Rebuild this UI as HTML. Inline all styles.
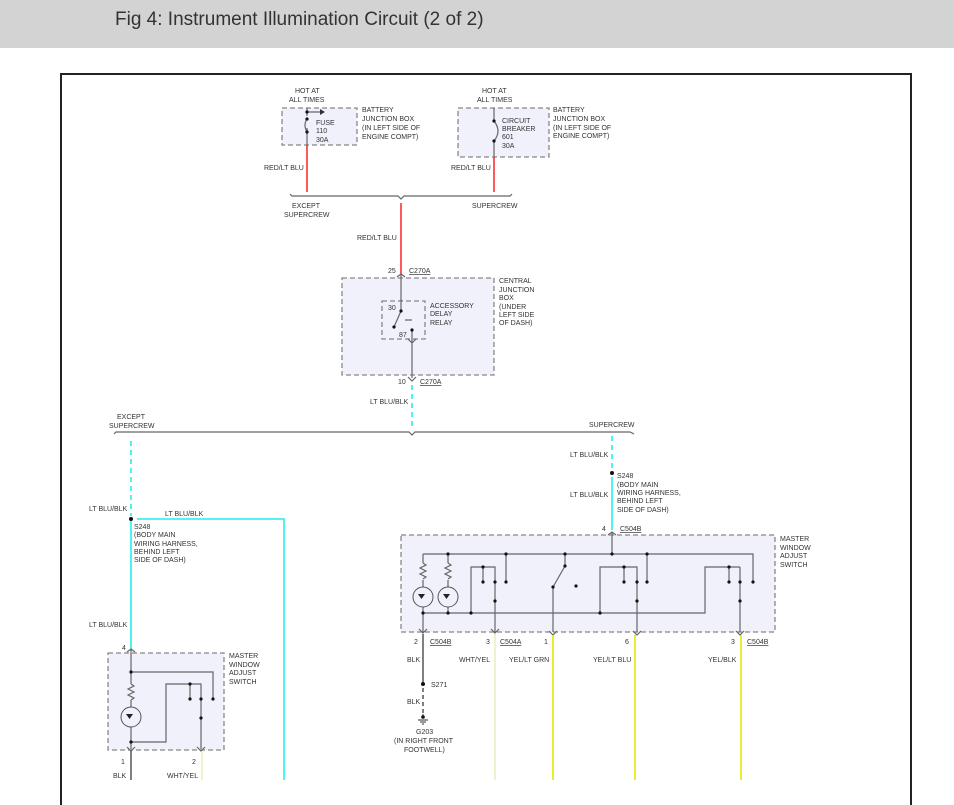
<!DOCTYPE html>
<html><head><meta charset="utf-8"><style>
body{margin:0;width:954px;height:805px;overflow:hidden;background:#fff;position:relative;font-family:"Liberation Sans",sans-serif}
#hd{position:absolute;left:0;top:0;width:954px;height:48px;background:#d3d3d3}
#hd span{position:absolute;left:115px;top:9px;font-size:19px;color:#333}
svg{position:absolute;left:0;top:0}
text{font-family:"Liberation Sans",sans-serif;font-size:7px;fill:#333}
.bx{fill:#f1f1fb;stroke:#888;stroke-width:1.3;stroke-dasharray:5 3}
.w{stroke:#666;stroke-width:1.2;fill:none}
.r{stroke:#f22;stroke-width:1.5}
.c{stroke:#2ee;stroke-width:1.6}
.cd{stroke:#2ee;stroke-width:1.6;stroke-dasharray:5 4}
.y{stroke:#e6e600;stroke-width:1.6}
.py{stroke:#ecebb8;stroke-width:1.4}
.k{stroke:#555;stroke-width:1.5}
</style></head><body>
<div id="hd"><span>Fig 4: Instrument Illumination Circuit (2 of 2)</span></div>
<svg width="954" height="805" viewBox="0 0 954 805">
<rect x="61" y="74" width="850" height="760" fill="none" stroke="#222" stroke-width="2"/>
<!-- top left fuse -->
<text x="295" y="93">HOT AT</text><text x="289" y="102">ALL TIMES</text>
<rect class="bx" x="282" y="108" width="75" height="37"/>
<path class="w" d="M307 108V116M307 128V145M307 112H320"/><path d="M320 109L325 112L320 115Z" fill="#333"/>
<path class="w" d="M307 119Q303 125 307 132"/>
<g fill="#111"><circle cx="307" cy="112" r="1.6"/><circle cx="307" cy="119" r="1.6"/><circle cx="307" cy="132" r="1.6"/></g>
<text x="316" y="125">FUSE</text><text x="316" y="133">110</text><text x="316" y="142">30A</text>
<text x="362" y="112">BATTERY</text><text x="362" y="121">JUNCTION BOX</text><text x="362" y="130">(IN LEFT SIDE OF</text><text x="362" y="139">ENGINE COMPT)</text>
<line class="r" x1="307" y1="145" x2="307" y2="192"/>
<text x="264" y="170">RED/LT BLU</text>
<!-- top right breaker -->
<text x="482" y="93">HOT AT</text><text x="477" y="102">ALL TIMES</text>
<rect class="bx" x="458" y="108" width="91" height="49"/>
<path class="w" d="M494 108V121M494 141V157"/><path class="w" d="M494 121Q502 131 494 141"/>
<g fill="#111"><circle cx="494" cy="121" r="1.6"/><circle cx="494" cy="141" r="1.6"/></g>
<text x="502" y="123">CIRCUIT</text><text x="502" y="131">BREAKER</text><text x="502" y="139">601</text><text x="502" y="148">30A</text>
<text x="553" y="112">BATTERY</text><text x="553" y="121">JUNCTION BOX</text><text x="553" y="130">(IN LEFT SIDE OF</text><text x="553" y="138">ENGINE COMPT)</text>
<line class="r" x1="494" y1="157" x2="494" y2="192"/>
<text x="451" y="170">RED/LT BLU</text>
<path class="w" d="M290 194L292 196H398L401 199L404 196H510L512 194"/>
<text x="292" y="208">EXCEPT</text><text x="284" y="217">SUPERCREW</text><text x="472" y="208">SUPERCREW</text>
<line class="r" x1="401" y1="203" x2="401" y2="274"/>
<text x="357" y="240">RED/LT BLU</text>
<text x="388" y="273">25</text><text x="409" y="273" text-decoration="underline">C270A</text>
<rect class="bx" x="342" y="278" width="152" height="97"/>
<text x="499" y="283">CENTRAL</text><text x="499" y="292">JUNCTION</text><text x="499" y="300">BOX</text><text x="499" y="309">(UNDER</text><text x="499" y="317">LEFT SIDE</text><text x="499" y="325">OF DASH)</text>
<path class="w" d="M397 277L401 274L405 277M401 274V301M397 303L401 300L405 303"/>
<rect class="bx" x="382" y="301" width="43" height="38"/>
<text x="388" y="310">30</text><text x="399" y="337">87</text>
<text x="430" y="308">ACCESSORY</text><text x="430" y="316">DELAY</text><text x="430" y="325">RELAY</text>
<path class="w" d="M401 301V311M401 311L394 327M405 320H412M412 330V378M408 339L412 343L416 339M408 377L412 381L416 377"/>
<g fill="#111"><circle cx="401" cy="311" r="1.6"/><circle cx="394" cy="327" r="1.6"/><circle cx="412" cy="330" r="1.6"/></g>
<text x="398" y="384">10</text><text x="420" y="384" text-decoration="underline">C270A</text>
<line class="cd" x1="412" y1="385" x2="412" y2="430"/>
<text x="370" y="404">LT BLU/BLK</text>
<path class="w" d="M114 434L116 432H409L412 435L415 432H630L634 434"/>
<text x="117" y="419">EXCEPT</text><text x="109" y="428">SUPERCREW</text><text x="589" y="427">SUPERCREW</text>
<!-- left branch -->
<line class="cd" x1="131" y1="441" x2="131" y2="516"/>
<text x="89" y="511">LT BLU/BLK</text><text x="165" y="516">LT BLU/BLK</text>
<circle cx="131" cy="519" r="2" fill="#111"/>
<path class="c" fill="none" d="M131 521V650M137 519H284V780"/>
<text x="134" y="529">S248</text><text x="134" y="537">(BODY MAIN</text><text x="134" y="546">WIRING HARNESS,</text><text x="134" y="554">BEHIND LEFT</text><text x="134" y="562">SIDE OF DASH)</text>
<text x="89" y="627">LT BLU/BLK</text><text x="122" y="650">4</text>
<rect class="bx" x="108" y="653" width="116" height="97"/>
<text x="229" y="658">MASTER</text><text x="229" y="667">WINDOW</text><text x="229" y="675">ADJUST</text><text x="229" y="684">SWITCH</text>
<path class="w" d="M127 652L131 649L135 652M131 650V684M131 700V707M131 727V749M131 672H213V699M131 742H166V684H201V749M190 684V699M127 747L131 751L135 747M197 747L201 751L205 747"/>
<path class="w" d="M131 684l3 2-6 3 6 3-6 3 6 3-3 2"/>
<circle cx="131" cy="717" r="10" fill="none" stroke="#555"/><path d="M126 714h7l-3.5 5z" fill="#222"/>
<g fill="#111"><circle cx="131" cy="672" r="1.6"/><circle cx="131" cy="742" r="1.6"/><circle cx="190" cy="684" r="1.6"/><circle cx="190" cy="699" r="1.6"/><circle cx="201" cy="699" r="1.6"/><circle cx="213" cy="699" r="1.6"/><circle cx="201" cy="718" r="1.6"/></g>
<text x="121" y="764">1</text><text x="192" y="764">2</text>
<line class="k" x1="131" y1="751" x2="131" y2="780"/><line class="py" x1="202" y1="752" x2="202" y2="780"/>
<text x="113" y="778">BLK</text><text x="167" y="778">WHT/YEL</text>
<!-- right branch -->
<line class="cd" x1="612" y1="436" x2="612" y2="470"/>
<text x="570" y="457">LT BLU/BLK</text><text x="570" y="497">LT BLU/BLK</text>
<circle cx="612" cy="473" r="2" fill="#111"/>
<line class="c" x1="612" y1="477" x2="612" y2="530"/>
<text x="617" y="478">S248</text><text x="617" y="487">(BODY MAIN</text><text x="617" y="495">WIRING HARNESS,</text><text x="617" y="503">BEHIND LEFT</text><text x="617" y="512">SIDE OF DASH)</text>
<text x="602" y="531">4</text><text x="620" y="531" text-decoration="underline">C504B</text>
<rect class="bx" x="401" y="535" width="374" height="97"/>
<text x="780" y="541">MASTER</text><text x="780" y="550">WINDOW</text><text x="780" y="558">ADJUST</text><text x="780" y="567">SWITCH</text>
<path class="w" d="M608 535L612 532L616 535M612 532V554M423 554H753V582M423 554V563M448 554V563M423 580V587M448 580V587M423 607V632M448 607V613M423 613H705V567H740M471 613V567H495V632M483 567V582M506 554V582M565 554V566L553 587V632M600 613V567H637V632M624 567V582M647 554V582M729 567V582M740 567V632"/>
<path class="w" d="M423 563l3 2-6 3 6 3-6 3 6 3-3 2M448 563l3 2-6 3 6 3-6 3 6 3-3 2"/>
<circle cx="423" cy="597" r="10" fill="none" stroke="#555"/><circle cx="448" cy="597" r="10" fill="none" stroke="#555"/>
<path d="M418 594h7l-3.5 5zM443 594h7l-3.5 5z" fill="#222"/>
<g fill="#111"><circle cx="448" cy="554" r="1.6"/><circle cx="506" cy="554" r="1.6"/><circle cx="565" cy="554" r="1.6"/><circle cx="612" cy="554" r="1.6"/><circle cx="647" cy="554" r="1.6"/>
<circle cx="423" cy="613" r="1.6"/><circle cx="448" cy="613" r="1.6"/><circle cx="471" cy="613" r="1.6"/><circle cx="600" cy="613" r="1.6"/>
<circle cx="483" cy="567" r="1.6"/><circle cx="483" cy="582" r="1.6"/><circle cx="495" cy="582" r="1.6"/><circle cx="495" cy="601" r="1.6"/><circle cx="506" cy="582" r="1.6"/>
<circle cx="565" cy="566" r="1.6"/><circle cx="553" cy="587" r="1.6"/><circle cx="576" cy="586" r="1.6"/>
<circle cx="624" cy="567" r="1.6"/><circle cx="624" cy="582" r="1.6"/><circle cx="637" cy="582" r="1.6"/><circle cx="637" cy="601" r="1.6"/><circle cx="647" cy="582" r="1.6"/>
<circle cx="729" cy="567" r="1.6"/><circle cx="729" cy="582" r="1.6"/><circle cx="740" cy="582" r="1.6"/><circle cx="740" cy="601" r="1.6"/><circle cx="753" cy="582" r="1.6"/></g>
<path class="w" d="M419 629L423 633L427 629M491 629L495 633L499 629M549 631L553 635L557 631M633 631L637 635L641 631M736 631L740 635L744 631"/>
<text x="414" y="644">2</text><text x="430" y="644" text-decoration="underline">C504B</text>
<text x="486" y="644">3</text><text x="500" y="644" text-decoration="underline">C504A</text>
<text x="544" y="644">1</text><text x="625" y="644">6</text>
<text x="731" y="644">3</text><text x="747" y="644" text-decoration="underline">C504B</text>
<line class="k" x1="423" y1="634" x2="423" y2="682"/>
<circle cx="423" cy="684" r="2" fill="#111"/>
<line x1="423" y1="688" x2="423" y2="714" stroke="#555" stroke-width="1.5" stroke-dasharray="4 3"/>
<path d="M423 714v4M418 720h10M420 722h6M422 724h2" stroke="#333" stroke-width="1"/><circle cx="423" cy="717" r="1.8" fill="#111"/>
<text x="407" y="662">BLK</text><text x="431" y="687">S271</text><text x="407" y="704">BLK</text>
<text x="416" y="734">G203</text><text x="394" y="743">(IN RIGHT FRONT</text><text x="404" y="752">FOOTWELL)</text>
<line class="py" x1="495" y1="634" x2="495" y2="780"/>
<line class="y" x1="553" y1="635" x2="553" y2="780"/>
<line class="y" x1="635" y1="635" x2="635" y2="780"/>
<line class="y" x1="741" y1="635" x2="741" y2="780"/>
<text x="459" y="662">WHT/YEL</text><text x="509" y="662">YEL/LT GRN</text><text x="593" y="662">YEL/LT BLU</text><text x="708" y="662">YEL/BLK</text>
</svg>
</body></html>
